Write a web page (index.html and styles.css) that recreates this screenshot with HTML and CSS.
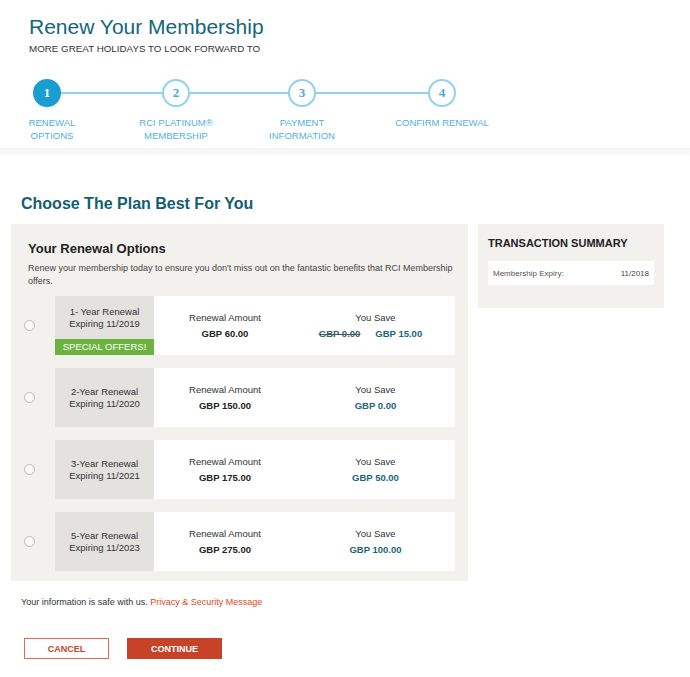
FILE: index.html
```html
<!DOCTYPE html>
<html>
<head>
<meta charset="utf-8">
<link rel="stylesheet" href="styles.css">
</head>
<body>
<header class="header">
  <h1 class="title">Renew Your Membership</h1>
  <p class="subtitle">MORE GREAT HOLIDAYS TO LOOK FORWARD TO</p>
  <div class="steps">
    <div class="steps-line"></div>
    <div class="step step-1">
      <span class="circle active">1</span>
      <span class="step-label label-1">RENEWAL<br>OPTIONS</span>
    </div>
    <div class="step step-2">
      <span class="circle">2</span>
      <span class="step-label">RCI PLATINUM®<br>MEMBERSHIP</span>
    </div>
    <div class="step step-3">
      <span class="circle">3</span>
      <span class="step-label">PAYMENT<br>INFORMATION</span>
    </div>
    <div class="step step-4">
      <span class="circle">4</span>
      <span class="step-label">CONFIRM RENEWAL</span>
    </div>
  </div>
</header>
<div class="band"></div>
<main class="main">
  <h2 class="plan-title">Choose The Plan Best For You</h2>
  <div class="columns">
    <section class="options">
      <h3 class="options-title">Your Renewal Options</h3>
      <p class="options-desc">Renew your membership today to ensure you don't miss out on the fantastic benefits that RCI Membership offers.</p>
      <div class="rows">
        <div class="row">
          <span class="radio"></span>
          <div class="card">
            <div class="term term-offer">
              <div class="term-text">1- Year Renewal<br>Expiring 11/2019</div>
              <div class="offer">SPECIAL OFFERS!</div>
            </div>
            <div class="amount">
              <div class="label">Renewal Amount</div>
              <div class="value">GBP 60.00</div>
            </div>
            <div class="save">
              <div class="label">You Save</div>
              <div class="value teal shifted"><s class="old">GBP 0.00</s><span>GBP 15.00</span></div>
            </div>
          </div>
        </div>
        <div class="row">
          <span class="radio"></span>
          <div class="card">
            <div class="term"><div class="term-text">2-Year Renewal<br>Expiring 11/2020</div></div>
            <div class="amount">
              <div class="label">Renewal Amount</div>
              <div class="value">GBP 150.00</div>
            </div>
            <div class="save">
              <div class="label">You Save</div>
              <div class="value teal">GBP 0.00</div>
            </div>
          </div>
        </div>
        <div class="row">
          <span class="radio"></span>
          <div class="card">
            <div class="term"><div class="term-text">3-Year Renewal<br>Expiring 11/2021</div></div>
            <div class="amount">
              <div class="label">Renewal Amount</div>
              <div class="value">GBP 175.00</div>
            </div>
            <div class="save">
              <div class="label">You Save</div>
              <div class="value teal">GBP 50.00</div>
            </div>
          </div>
        </div>
        <div class="row">
          <span class="radio"></span>
          <div class="card">
            <div class="term"><div class="term-text">5-Year Renewal<br>Expiring 11/2023</div></div>
            <div class="amount">
              <div class="label">Renewal Amount</div>
              <div class="value">GBP 275.00</div>
            </div>
            <div class="save">
              <div class="label">You Save</div>
              <div class="value teal">GBP 100.00</div>
            </div>
          </div>
        </div>
      </div>
    </section>
    <aside class="summary">
      <h3 class="summary-title">TRANSACTION SUMMARY</h3>
      <div class="summary-box">
        <span>Membership Expiry:</span>
        <span class="summary-val">11/2018</span>
      </div>
    </aside>
  </div>
  <p class="safe">Your information is safe with us. <a class="link" href="#">Privacy &amp; Security Message</a></p>
  <div class="buttons">
    <button class="btn btn-cancel">CANCEL</button>
    <button class="btn btn-continue">CONTINUE</button>
  </div>
</main>
</body>
</html>
```
FILE: styles.css
```css
* { box-sizing: border-box; }
body {
  margin: 0;
  font-family: "Liberation Sans", Arial, sans-serif;
  color: #333;
  background: #fff;
}
.header {
  padding: 13px 0 0 29px;
  height: 148px;
}
.title {
  margin: 0;
  font-size: 21px;
  font-weight: normal;
  color: #13667a;
  line-height: 28px;
}
.subtitle {
  margin: 2px 0 0;
  font-size: 9.8px;
  color: #333;
  line-height: 12px;
}
.steps {
  position: relative;
  display: flex;
  margin: 24px 0 0 -29px;
}
.steps-line {
  position: absolute;
  left: 47px;
  width: 395px;
  top: 13px;
  height: 2px;
  background: #8ed3ec;
}
.step {
  display: flex;
  flex-direction: column;
  align-items: center;
  position: relative;
}
.step-1 { width: 94px; }
.step-2 { width: 164px; }
.step-3 { width: 88px; }
.step-4 { width: 192px; }
.circle {
  width: 28px;
  height: 28px;
  border-radius: 50%;
  border: 2px solid #8ed3ec;
  background: #fff;
  color: #4aa9d4;
  font-family: "Liberation Serif", "Times New Roman", serif;
  font-weight: bold;
  font-size: 13px;
  display: flex;
  align-items: center;
  justify-content: center;
}
.circle.active {
  background: #1a9dd1;
  border-color: #1a9dd1;
  color: #fff;
}
.step-label {
  margin-top: 9px;
  font-size: 9.5px;
  line-height: 13px;
  color: #4db2dc;
  text-align: center;
}
.label-1 { padding-left: 10px; }
.band {
  height: 8px;
  background: linear-gradient(#f4f4f4, #fbfbfb);
}
.main {
  padding: 0 0 0 11px;
}
.plan-title {
  margin: 38px 0 0 10px;
  font-size: 16px;
  line-height: 20px;
  color: #12606f;
}
.columns {
  display: flex;
  align-items: flex-start;
  gap: 10px;
  margin-top: 10px;
}
.options {
  width: 457px;
  background: #f3f1ed;
  padding: 16px 13px 10px 17px;
}
.options-title {
  margin: 0;
  font-size: 13px;
  line-height: 18px;
  color: #222;
}
.options-desc {
  margin: 4px 0 0;
  font-size: 9px;
  line-height: 13px;
  color: #444;
}
.rows {
  display: flex;
  flex-direction: column;
  gap: 13px;
  margin-top: 8px;
}
.row {
  display: flex;
  align-items: center;
}
.radio {
  width: 11px;
  height: 11px;
  border-radius: 50%;
  border: 1px solid #b9b9b9;
  background: #fafafa;
  margin-left: -4px;
  margin-right: 20px;
  flex: none;
}
.card {
  display: flex;
  width: 400px;
  height: 59px;
  background: #fff;
}
.term {
  width: 99px;
  background: #e4e2df;
  display: flex;
  flex-direction: column;
  justify-content: center;
  text-align: center;
}
.term-text {
  font-size: 9.5px;
  line-height: 12px;
  color: #333;
}
.term-offer .term-text {
  flex: 1;
  display: flex;
  align-items: center;
  justify-content: center;
}
.offer {
  height: 16px;
  background: #6cb43f;
  color: #fff;
  font-size: 9.5px;
  line-height: 16px;
}
.amount {
  width: 142px;
  display: flex;
  flex-direction: column;
  align-items: center;
  justify-content: center;
}
.save {
  flex: 1;
  display: flex;
  flex-direction: column;
  align-items: center;
  justify-content: center;
}
.label {
  font-size: 9.5px;
  line-height: 12px;
  color: #333;
}
.value {
  margin-top: 4px;
  font-size: 9.5px;
  font-weight: bold;
  line-height: 12px;
  color: #222;
}
.value.teal { color: #1a6678; display: flex; gap: 15px; }
.value.shifted { margin-right: 10px; }
.old { color: #3b5d66; }
.summary {
  width: 186px;
  height: 84px;
  background: #f3f1ed;
  padding: 12px 10px 0;
}
.summary-title {
  margin: 0;
  font-size: 11px;
  line-height: 14px;
  color: #222;
}
.summary-box {
  margin-top: 11px;
  height: 24px;
  background: #fff;
  display: flex;
  align-items: center;
  justify-content: space-between;
  padding: 0 5px;
  font-size: 8px;
  color: #555;
}
.summary-val { color: #444; }
.safe {
  margin: 15px 0 0 10px;
  font-size: 9px;
  line-height: 12px;
  color: #333;
}
.link { color: #d84a22; text-decoration: none; }
.buttons {
  display: flex;
  gap: 18px;
  margin: 30px 0 0 13px;
}
.btn {
  height: 21px;
  font-family: "Liberation Sans", Arial, sans-serif;
  font-size: 9px;
  font-weight: bold;
  padding: 0;
  cursor: pointer;
}
.btn-cancel {
  width: 85px;
  background: #fff;
  border: 1px solid #e06a52;
  color: #c8432a;
}
.btn-continue {
  width: 95px;
  background: #c6432a;
  border: 1px solid #c6432a;
  color: #fff;
}
```
